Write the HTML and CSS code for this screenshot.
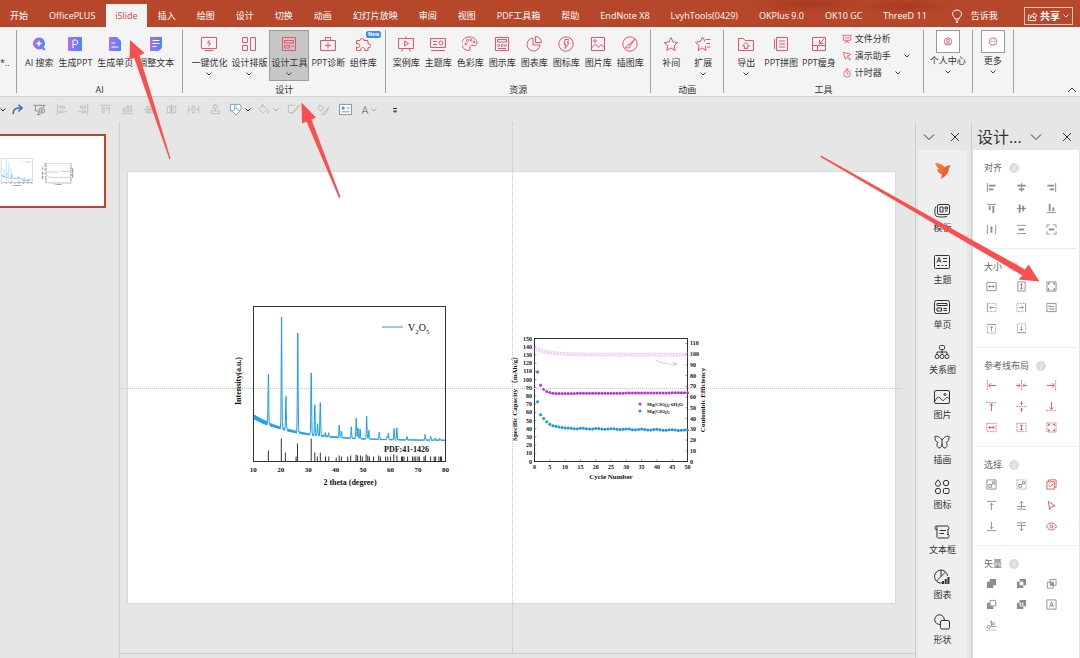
FILE: index.html
```html
<!doctype html>
<html lang="zh-CN">
<head>
    <meta charset="UTF-8">
    <meta name="viewport" content="width=device-width, initial-scale=1.0">
    <title>iSlide</title>
    <link rel="stylesheet" href="styles.css">
</head>
<body>
<!--    icon sprite    -->
    <svg class="sprite" aria-hidden="true">
        <linearGradient id="ai-fill" x1="0" y1="0" x2="1" y2="0">
            <stop offset="0" stop-color="#b06cf6"/>
            <stop offset="1" stop-color="#4a86fb"/>
        </linearGradient>
        <linearGradient id="bird-fill" x1="0" y1="0" x2="1" y2="1">
            <stop offset="0" stop-color="#fb8a3c"/>
            <stop offset="1" stop-color="#e8402c"/>
        </linearGradient>
        <symbol id="i-chev" viewBox="0 0 8 8"><path d="M1.500 2.500 4 5l2.500-2.500"/></symbol>
        <symbol id="i-down" viewBox="0 0 12 12"><path d="M1 3.500l5 5 5-5"/></symbol>
        <symbol id="i-up" viewBox="0 0 12 12"><path d="M2 8l4-4 4 4"/></symbol>
        <symbol id="i-close" viewBox="0 0 12 12"><path d="M2 2l8 8M10 2l-8 8"/></symbol>
        <symbol id="i-bulb" viewBox="0 0 12 14"><path d="M4 10c0-2-2.500-2.500-2.500-5a4.500 4 0 0 1 9 0c0 2.500-2.500 3-2.500 5zM4.500 12h3M5 13.500h2"/></symbol>
        <symbol id="i-share" viewBox="0 0 12 12"><path d="M3.500 4.500h-2v6h8v-3M3.500 8c.5-3 2-4 4-4V2l3.500 3-3.500 3V6c-2 0-3 .5-4 2z"/></symbol>

        <symbol id="i-ai-search" viewBox="0 0 16 16"><path class="ai" d="M8 1.500a6 6 0 1 0 3 11.200l2 2 1.500-1.500-1.800-2A6 6 0 0 0 8 1.500z"/><path class="white" d="M8 4l1 2.500 2.500 1-2.500 1-1 2.500-1-2.500-2.500-1 2.500-1z"/></symbol>
        <symbol id="i-ai-ppt" viewBox="0 0 16 16"><rect class="ai" x="1" y="1" width="14" height="14" rx="1"/><path class="cut" d="M6 12V4h2.500a2.200 2.200 0 0 1 0 4.500H6"/></symbol>
        <symbol id="i-ai-page" viewBox="0 0 16 16"><path class="ai" d="M2 1h8l4 4v10H2z"/><path class="cut" d="M4.500 7h4M4.500 11h7"/></symbol>
        <symbol id="i-ai-text" viewBox="0 0 16 16"><path class="ai" d="M2 1h12v10c-1 2.500-2.500 4-5 4H2z"/><path class="cut" d="M4.500 4.500h7M4.500 7.500h7M4.500 10.500h4"/></symbol>

        <symbol id="i-optimize" viewBox="0 0 16 16"><path d="M.5 1.500h15v11H.5zM3.500 14.500h9M8.500 4L6.500 7h3L7.500 10"/></symbol>
        <symbol id="i-layout" viewBox="0 0 16 16"><path d="M1.500 1.500h5v5h-5zM1.500 9.500h5v5h-5zM9.500 1.500h5v13h-5z"/></symbol>
        <symbol id="i-design" viewBox="0 0 16 16"><path d="M1.500 1.500h13v13h-13zM3.500 4.500h9v2.500h-9zM3.500 9.500h5v2.500h-5zM10.500 10h2.500"/></symbol>
        <symbol id="i-kit" viewBox="0 0 16 16"><path d="M.5 4.500h15v10H.5zM5.500 4.500v-3h5v3M8 6.500v6M5 9.500h6"/></symbol>
        <symbol id="i-puzzle" viewBox="0 0 16 16"><path d="M1.500 4.500h3.500a2 2 0 1 1 4 0h4v3.500a2 2 0 1 1 0 3.500v3H9.500a2 2 0 1 0-3.500 0H1.500v-3.500a2 2 0 1 0 0-3z"/></symbol>
        <symbol id="i-case" viewBox="0 0 16 16"><path d="M.5 2.500h15v10H.5zM5 12.500l-1.500 3M11 12.500l1.500 3M8 .5v2M6.500 5l4 2.500-4 2.500z"/></symbol>
        <symbol id="i-theme" viewBox="0 0 16 16"><path d="M.5 2.500h15v9H.5zM1 14.500h14M3 5.500h4M3 8.500h4"/><circle cx="11" cy="7" r="2"/></symbol>
        <symbol id="i-palette" viewBox="0 0 16 16"><path d="M8 1a7 6.500 0 1 0-2 13.500c2 .5 2.500-1 2-2.500-.5-2 1-3 3-2.500s4 0 4-2.500C15 3.500 12 1 8 1z"/><circle cx="4" cy="8" r="1"/><circle cx="5.500" cy="4.500" r="1"/><circle cx="9" cy="4" r="1"/><circle cx="12" cy="6" r="1"/></symbol>
        <symbol id="i-diagram" viewBox="0 0 16 16"><path d="M1.500 1.500h13v13h-13zM3.500 3.500h9v2.500h-9zM4 12.500h8"/><circle cx="4.500" cy="9.500" r="1"/><circle cx="8" cy="9.500" r="1"/><circle cx="11.500" cy="9.500" r="1"/></symbol>
        <symbol id="i-pie" viewBox="0 0 16 16"><path d="M7 2a6.500 6.500 0 1 0 7 7H7zM9.500.5v6h6a6 6 0 0 0-6-6z"/></symbol>
        <symbol id="i-flash" viewBox="0 0 16 16"><circle cx="8" cy="8" r="7.200"/><path d="M7 3.500h3.500L9.500 7h1.500l-4 5.500.8-4H6z"/></symbol>
        <symbol id="i-image" viewBox="0 0 16 16"><path d="M1.500 1.500h13v13h-13zM1.500 12l4-4 3 3.500 2.500-3 3.500 3"/><circle cx="5" cy="5" r="1.200"/></symbol>
        <symbol id="i-brush" viewBox="0 0 16 16"><circle cx="8" cy="8" r="7.200"/><path d="M12.500 3.500L7 8.500l1.200 1.200zM7 8.500c-2 0-2 2-3.500 3 2 1 5 .5 4.700-1.800"/></symbol>
        <symbol id="i-star" viewBox="0 0 16 16"><path d="M8 1.500l2 4.500 4.800.5-3.600 3.200 1 4.800L8 12l-4.200 2.500 1-4.800L1.200 6.500 6 6z"/></symbol>
        <symbol id="i-star-more" viewBox="0 0 16 16"><path d="M10 5.500L7.500 1l-2 4.500-5 .8 3.600 3.400-1 4.800L7 12l4 2.500-.6-4.500M10.500 3.500h5M11.500 7.500h3.500M12 11h3.500"/></symbol>
        <symbol id="i-export" viewBox="0 0 16 16"><path d="M.5 2.500h5l1.500 2h8.500v10H.5zM8 6.500L4.500 10h2v2.500h3V10h2z"/></symbol>
        <symbol id="i-collage" viewBox="0 0 16 16"><path d="M3.500 1.500h11v13h-11zM1.500 3v10M6 5h6M6 8h6M6 11h6"/></symbol>
        <symbol id="i-slim" viewBox="0 0 16 16"><path d="M1.500 1.500h13v13h-13zM1.500 9.500h5v5M6.500 9.500h8M13 3L8.500 7.500M8.500 4v3.500H12"/></symbol>
        <symbol id="i-analysis" viewBox="0 0 12 12"><path d="M.5 1.500h11M1.500 1.500v6h9v-6M6 7.500v2M3 10.500l3-1.500 3 1.500M3.500 5.500l1.500-2 2 2 1.500-2"/></symbol>
        <symbol id="i-pointer" viewBox="0 0 12 12"><path d="M1.500 1.500l9 2.500-4 2 4 4-1 1-4-4-1.500 3z"/></symbol>
        <symbol id="i-timer" viewBox="0 0 12 12"><circle cx="6" cy="7" r="4"/><path d="M4.500 1h3M6 1v2M6 4.500V7h2M10 2l1 1"/></symbol>
        <symbol id="i-user" viewBox="0 0 12 12"><circle cx="6" cy="6" r="4"/><circle cx="6" cy="5" r="1.500"/><path d="M3.500 9c1-2 4-2 5 0"/></symbol>
        <symbol id="i-more" viewBox="0 0 12 12"><circle cx="6" cy="6" r="4"/><path d="M3.500 6h1M5.500 6h1M7.500 6h1"/></symbol>

        <symbol id="q-redo" viewBox="0 0 14 14"><path stroke-width="1.600" d="M2.500 12C2 7 5 5 11 5.500M8 2l4 3.500L8 9"/></symbol>
        <symbol id="q-show" viewBox="0 0 14 14"><path d="M.5 2.500h13M2.500 2.500v6h3M11.500 2.500v2M4 12.500h4M6 9v3"/><circle cx="9.500" cy="8" r="3"/><path d="M8.800 6.500l2 1.500-2 1.500z"/></symbol>
        <symbol id="q-left" viewBox="0 0 14 14"><path d="M2.500 1v12M4.500 3.500h6v2h-6zM4.500 8.500h4v2h-4zM10 9.500h3"/></symbol>
        <symbol id="q-right" viewBox="0 0 14 14"><path d="M11.500 1v12M3.500 3.500h6v2h-6zM5.500 8.500h4v2h-4zM1 9.500h3"/></symbol>
        <symbol id="q-top" viewBox="0 0 14 14"><path d="M1 2.500h12M3.500 4.500h2v6h-2zM7.500 4.500h1v4M11 12V5M9.500 6.500L11 5l1.500 1.500"/></symbol>
        <symbol id="q-bottom" viewBox="0 0 14 14"><path d="M1 11.500h12M2.500 5.500h2v4h-2zM6.500 3.500h2v6h-2zM11 2v7M9.500 7.500L11 9l1.500-1.500"/></symbol>
        <symbol id="q-center" viewBox="0 0 14 14"><path d="M1 7h12M4 3.500h6v2H4zM3 8.500h8v2H3z"/></symbol>
        <symbol id="q-middle" viewBox="0 0 14 14"><path d="M7 1v12M2.500 3.500h3v7h-3zM8.500 3.500h3v7h-3z"/></symbol>
        <symbol id="q-hspace" viewBox="0 0 14 14"><path d="M1.500 3v8M5.500 3.500h3v7h-3zM12.500 3v8M10 7h2.500M1.500 7H4"/></symbol>
        <symbol id="q-vspace" viewBox="0 0 14 14"><path d="M4.500 2.500h5v3h-5zM2.500 8.500h9v3h-9zM7 1v1M7 6v2"/></symbol>
        <symbol id="q-shapes" viewBox="0 0 14 14"><path class="paper" d="M1.500 1.500h7v7h-7z"/><circle class="paper" cx="9.500" cy="5" r="3.800"/><path class="paper" d="M7.500 5l4 4-4 4-4-4z"/></symbol>
        <symbol id="q-bucket" viewBox="0 0 14 14"><path d="M6 2l5 5-4.500 4-4.500-4.500zM6 5V1M12 8c1 2 1 3 0 3s-1-1 0-3z"/></symbol>
        <symbol id="q-pencil" viewBox="0 0 14 14"><path d="M8 2.500H1.500v8h5M13 2L6 9.500l-1 2 2-1L13.500 3z"/></symbol>
        <symbol id="q-paint" viewBox="0 0 14 14"><path d="M3 2l4 3-3 4-3-3zM13 4L8 10l-3 2.500c2 .5 4 0 4.500-1.500z"/></symbol>
        <symbol id="q-text" viewBox="0 0 14 14"><path class="paper" d="M.5 1.500h13v11H.5z"/><path d="M8 5.500h3.500M3 9.500h8.500"/><path class="solid-blue" d="M3 4h3v3H3z"/></symbol>
        <symbol id="q-more" viewBox="0 0 8 8"><path d="M2 2.500h4M2.500 5L4 6.500 5.500 5z"/></symbol>

        <symbol id="d-bird" viewBox="0 0 18 18"><path class="bird" d="M1 1c4 0 8 1.500 9.500 4.500C12 4 14 3 17 4l-2 2c-.5 5-3 8-8 11l1-4.500C5 11.500 3.500 9.500 3 7l3 .5C3.500 6 2 4 1 1z"/></symbol>
        <symbol id="d-template" viewBox="0 0 16 16"><rect x="3.500" y="2.500" width="12" height="10" rx="1.500"/><path d="M6 5h3v5H6zM11 5h2.500v2H11zM11 9h2.500M2 4.500C.5 6 .5 12 1.500 13.500S8 15.500 13 14.500"/></symbol>
        <symbol id="d-theme" viewBox="0 0 16 16"><rect x=".5" y="1.500" width="15" height="13" rx="1"/><path d="M3 8.500l2-5 2 5M3.700 7h2.600M9 4.500h4M9 7.500h4M3 11.500h3M7.500 11.500h2M11 11.500h2"/></symbol>
        <symbol id="d-page" viewBox="0 0 16 16"><rect x=".5" y="1.500" width="15" height="13" rx="2"/><path d="M3 4.500h10v2H3zM3 9h4.500v3H3zM9.500 9.500H13M9.500 11.500H13"/></symbol>
        <symbol id="d-relation" viewBox="0 0 16 16"><rect x="5.500" y="1.500" width="5" height="4" rx="1"/><path d="M8 5.500v5M3 10.500v-2.500h10v2.500"/><circle cx="3" cy="12.500" r="2"/><circle cx="8" cy="12.500" r="2"/><circle cx="13" cy="12.500" r="2"/></symbol>
        <symbol id="d-image" viewBox="0 0 16 16"><rect x=".5" y="1.500" width="15" height="13" rx="1.500"/><path d="M1 12c2-4 4-5 6-2 1.500 2 2.500 2 4 0s3-2 4.500 0"/><circle cx="11" cy="5.500" r="1"/></symbol>
        <symbol id="d-butterfly" viewBox="0 0 16 16"><path d="M8 6C6 3 3 1.500.8 2.500 1 6 2 8 4 8.500c-2 1.500-1 5 1 5.500 2 0 3-2 3-4V6c2-3 5-4.500 7.200-3.500C15 6 14 8 12 8.500c2 1.500 1 5-1 5.500-2 0-3-2-3-4"/></symbol>
        <symbol id="d-icons" viewBox="0 0 16 16"><path d="M4 .8c1.500 1.700 2.500 3 2.500 4.200a2.500 2.200 0 0 1-5 0C1.500 3.800 2.500 2.500 4 .8z"/><circle cx="12" cy="4" r="2.700"/><circle cx="4" cy="12" r="2.700"/><rect x="9.500" y="9.500" width="5.500" height="5" rx="1"/></symbol>
        <symbol id="d-textbox" viewBox="0 0 16 16"><path d="M3 5.500H1.500c-1-1-1-3 .5-3.500h11.500c1.500.5 1.500 2 1 3.500M13 10.500h1.500c1 1 1 3-.5 3.500H4.500c-1.500 0-2-1.500-1.500-3V2.500M14 5v6M5.500 6.500h6.500M5.500 9.500H10"/></symbol>
        <symbol id="d-chart" viewBox="0 0 16 16"><path d="M8 14A6.500 6.500 0 1 1 13.500 7M7 1v6.500l4.500-4.500M7 7.500L2.500 12"/><path class="solid" d="M8 12h2v3H8zM10.700 10h2v5h-2zM13.400 8h2v7h-2z"/></symbol>
        <symbol id="d-shape" viewBox="0 0 16 16"><path d="M6.500 10.300A4.800 4.800 0 1 1 10.300 6"/><rect x="6.500" y="6.500" width="9" height="8.500" rx="1.500"/></symbol>

        <symbol id="t-left" viewBox="0 0 12 12"><path d="M1.500 1v10"/><path class="thick" d="M3 4h7.500M3 8h5"/></symbol>
        <symbol id="t-hcenter" viewBox="0 0 12 12"><path d="M6 1v10"/><path class="thick" d="M1.500 4h9M3 8h6"/></symbol>
        <symbol id="t-right" viewBox="0 0 12 12"><path d="M10.500 1v10"/><path class="thick" d="M1.500 4H9M4 8h5"/></symbol>
        <symbol id="t-top" viewBox="0 0 12 12"><path d="M1 1.500h10"/><path class="thick" d="M4 3v5M8 3v8"/></symbol>
        <symbol id="t-vcenter" viewBox="0 0 12 12"><path d="M1 6h10"/><path class="thick" d="M4 1.500v9M8 3v6"/></symbol>
        <symbol id="t-bottom" viewBox="0 0 12 12"><path d="M1 10.500h10"/><path class="thick" d="M4 1v8M8 5v4"/></symbol>
        <symbol id="t-hdist" viewBox="0 0 12 12"><path d="M1.500 1v10M10.500 1v10"/><path class="thick" d="M6 2.500v7"/></symbol>
        <symbol id="t-vdist" viewBox="0 0 12 12"><path d="M1 1.500h10M1 10.500h10"/><path class="thick" d="M3 6h6"/></symbol>
        <symbol id="t-pagefit" viewBox="0 0 12 12"><path d="M1 4V1h3M8 1h3v3M11 8v3H8M4 11H1V8"/><path class="thick" d="M3 6h6"/></symbol>
        <symbol id="t-samew" viewBox="0 0 12 12"><path d="M1 1.500h10v9H1zM3 6h6M4.500 4.500L3 6l1.500 1.500M7.500 4.500L9 6 7.500 7.500"/></symbol>
        <symbol id="t-sameh" viewBox="0 0 12 12"><path d="M2 1h8v10H2zM6 3v6M4.500 4.500L6 3l1.500 1.500M4.500 7.500L6 9l1.500-1.500"/></symbol>
        <symbol id="t-samesize" viewBox="0 0 12 12"><path d="M1 1h10v10H1z"/><path class="solid" d="M2 5V2h3zM7 2h3v3zM10 7v3H7zM5 10H2V7z"/></symbol>
        <symbol id="t-extl" viewBox="0 0 12 12"><path d="M1.500 1v10M4 6h5M5.500 4.500L4 6l1.500 1.500"/><path class="dash" d="M3 1.500h8v9H3"/></symbol>
        <symbol id="t-extr" viewBox="0 0 12 12"><path d="M10.500 1v10M3 6h5M6.500 4.500L8 6 6.500 7.500"/><path class="dash" d="M9 1.500H1v9h8"/></symbol>
        <symbol id="t-swap" viewBox="0 0 12 12"><path d="M1 1.500h10v9H1zM3 5h6M3 5l1.500-1.500M9 7.500H3M9 7.500L7.500 9"/></symbol>
        <symbol id="t-extt" viewBox="0 0 12 12"><path d="M1 1.500h10M6 9V4M4.500 5.500L6 4l1.500 1.500"/><path class="dash" d="M1.500 3v8h9V3"/></symbol>
        <symbol id="t-extb" viewBox="0 0 12 12"><path d="M1 10.500h10M6 3v5M4.500 6.500L6 8l1.500-1.500"/><path class="dash" d="M1.500 9V1h9v8"/></symbol>
        <symbol id="t-gl" viewBox="0 0 12 12"><path d="M3 6h8M5.500 3.500L3 6l2.500 2.500"/><path class="dash" d="M1.500 0v12"/></symbol>
        <symbol id="t-gc" viewBox="0 0 12 12"><path d="M0 6h4M2.500 4L4.500 6l-2 2M12 6H8M9.500 4l-2 2 2 2"/><path class="dash" d="M6 0v12"/></symbol>
        <symbol id="t-gr" viewBox="0 0 12 12"><path d="M1 6h8M6.500 3.500L9 6 6.500 8.500"/><path class="dash" d="M10.500 0v12"/></symbol>
        <symbol id="t-gt" viewBox="0 0 12 12"><path d="M6 11V3M4 5l2-2 2 2"/><path class="dash" d="M0 1.500h12"/></symbol>
        <symbol id="t-gm" viewBox="0 0 12 12"><path d="M6 0v4M4.500 2.500L6 4l1.500-1.500M6 12V8M4.500 9.500L6 8l1.500 1.500"/><path class="dash" d="M0 6h12"/></symbol>
        <symbol id="t-gb" viewBox="0 0 12 12"><path d="M6 1v8M4 7l2 2 2-2"/><path class="dash" d="M0 10.500h12"/></symbol>
        <symbol id="t-gw" viewBox="0 0 12 12"><path d="M3 6h6M4.500 4.500L3 6l1.500 1.500M7.500 4.500L9 6 7.500 7.500"/><path class="dash" d="M1 1.500h10v9H1z"/></symbol>
        <symbol id="t-gh" viewBox="0 0 12 12"><path d="M6 3v6M4.500 4.500L6 3l1.500 1.500M4.500 7.500L6 9l1.500-1.500"/><path class="dash" d="M1 1.500h10v9H1z"/></symbol>
        <symbol id="t-gs" viewBox="0 0 12 12"><path class="solid" d="M2 5V2h3zM7 2h3v3zM10 7v3H7zM5 10H2V7z"/><path class="dash" d="M1 1h10v10H1z"/></symbol>
        <symbol id="t-group" viewBox="0 0 12 12"><path d="M1 1h10v10H1zM3 6h3v3H3zM7 3h2.500v2.500H7z"/></symbol>
        <symbol id="t-ungroup" viewBox="0 0 12 12"><path class="dash" d="M1 1h10v10H1z"/><path d="M3 6h3v3H3zM7 3h2.500v2.500H7z"/></symbol>
        <symbol id="t-check" viewBox="0 0 12 12"><path d="M1 3h8v8H1zM3 3V1h8v8H9M3 6.500L4.500 8.500 7.500 5.500"/></symbol>
        <symbol id="t-front" viewBox="0 0 12 12"><path d="M1 1.500h10M6 11V3.500M4 5.500l2-2 2 2"/></symbol>
        <symbol id="t-forward" viewBox="0 0 12 12"><path d="M1 7h10M1 10h10M6 9V1.500M4 3.500l2-2 2 2"/></symbol>
        <symbol id="t-select" viewBox="0 0 12 12"><path d="M2.500 1.500l7.500 5-4 .5-2 3.500z"/></symbol>
        <symbol id="t-back" viewBox="0 0 12 12"><path d="M1 10.500h10M6 1v7.500M4 6.500l2 2 2-2"/></symbol>
        <symbol id="t-backward" viewBox="0 0 12 12"><path d="M1 2h10M1 5h10M6 3v7.500M4 8.500l2 2 2-2"/></symbol>
        <symbol id="t-eye" viewBox="0 0 12 12"><path d="M.5 6C3 1 9 1 11.500 6 9 11 3 11 .5 6z"/><circle cx="6" cy="6" r="1.500"/></symbol>
        <symbol id="t-union" viewBox="0 0 12 12"><path class="solid" d="M4 1h7v7H8v3H1V4h3z"/></symbol>
        <symbol id="t-combine" viewBox="0 0 12 12"><path class="solid" fill-rule="evenodd" d="M4 1h7v7H8v3H1V4h3zM4 4h4v4H4z"/></symbol>
        <symbol id="t-intersect" viewBox="0 0 12 12"><path d="M4.500 1.500h6.500v6.500H4.500zM1.500 4.500H8V11H1.500z"/><path class="solid" d="M5 5h3v3H5z"/></symbol>
        <symbol id="t-subtract" viewBox="0 0 12 12"><path d="M4.500 1.500h6v6h-6z"/><path class="solid" d="M1 4h3v4h4v3H1z"/></symbol>
        <symbol id="t-fragment" viewBox="0 0 12 12"><path class="solid" fill-rule="evenodd" d="M4 1h7v7H8v3H1V4h3zM4 4h4v4H4zM5 5h2v2H5z"/></symbol>
        <symbol id="t-char" viewBox="0 0 12 12"><path d="M1 1h10v10H1zM4 9l2-6 2 6M4.700 7h2.600"/></symbol>
        <symbol id="t-cut" viewBox="0 0 12 12"><path d="M6 1v6M4 2.500L6 1M6 7h5"/><circle cx="3" cy="7.500" r="1.700"/><circle cx="8" cy="4" r="1.200"/><path class="dash" d="M0 11h12"/></symbol>
    </svg>

<!--    tabs    -->
    <nav class="tabs">
        <a class="tab" href="#">开始</a>
        <a class="tab" href="#">OfficePLUS</a>
        <a class="tab active" href="#">iSlide</a>
        <a class="tab" href="#">插入</a>
        <a class="tab" href="#">绘图</a>
        <a class="tab" href="#">设计</a>
        <a class="tab" href="#">切换</a>
        <a class="tab" href="#">动画</a>
        <a class="tab" href="#">幻灯片放映</a>
        <a class="tab" href="#">审阅</a>
        <a class="tab" href="#">视图</a>
        <a class="tab" href="#">PDF工具箱</a>
        <a class="tab" href="#">帮助</a>
        <a class="tab" href="#">EndNote X8</a>
        <a class="tab" href="#">LvyhTools(0429)</a>
        <a class="tab" href="#">OKPlus 9.0</a>
        <a class="tab" href="#">OK10 GC</a>
        <a class="tab" href="#">ThreeD 11</a>
        <button class="tell"><svg><use href="#i-bulb"/></svg>告诉我</button>
        <button class="share"><svg><use href="#i-share"/></svg>共享<svg class="chev"><use href="#i-chev"/></svg></button>
    </nav>

<!--    ribbon    -->
    <div class="ribbon">
        <div class="group cut-off"><span>*..</span></div>
        <div class="group wide">
            <div class="items spaced">
                <button class="tool"><svg><use href="#i-ai-search"/></svg>AI 搜索</button>
                <button class="tool"><svg><use href="#i-ai-ppt"/></svg>生成PPT</button>
                <button class="tool"><svg><use href="#i-ai-page"/></svg>生成单页</button>
                <button class="tool"><svg><use href="#i-ai-text"/></svg>调整文本</button>
            </div>
            <div class="caption">AI</div>
        </div>
        <div class="group wide">
            <div class="items">
                <button class="tool"><svg><use href="#i-optimize"/></svg>一键优化<svg class="chev"><use href="#i-chev"/></svg></button>
                <button class="tool"><svg><use href="#i-layout"/></svg>设计排版<svg class="chev"><use href="#i-chev"/></svg></button>
                <button class="tool on"><svg><use href="#i-design"/></svg>设计工具<svg class="chev"><use href="#i-chev"/></svg></button>
                <button class="tool"><svg><use href="#i-kit"/></svg>PPT诊断</button>
                <button class="tool"><svg><use href="#i-puzzle"/></svg>组件库<span class="new">New</span></button>
            </div>
            <div class="caption">设计</div>
        </div>
        <div class="group">
            <div class="items">
                <button class="tool"><svg><use href="#i-case"/></svg>案例库</button>
                <button class="tool"><svg><use href="#i-theme"/></svg>主题库</button>
                <button class="tool"><svg><use href="#i-palette"/></svg>色彩库</button>
                <button class="tool"><svg><use href="#i-diagram"/></svg>图示库</button>
                <button class="tool"><svg><use href="#i-pie"/></svg>图表库</button>
                <button class="tool"><svg><use href="#i-flash"/></svg>图标库</button>
                <button class="tool"><svg><use href="#i-image"/></svg>图片库</button>
                <button class="tool"><svg><use href="#i-brush"/></svg>插图库</button>
            </div>
            <div class="caption">资源</div>
        </div>
        <div class="group">
            <div class="items">
                <button class="tool"><svg><use href="#i-star"/></svg>补间</button>
                <button class="tool"><svg><use href="#i-star-more"/></svg>扩展<svg class="chev"><use href="#i-chev"/></svg></button>
            </div>
            <div class="caption">动画</div>
        </div>
        <div class="group wide">
            <div class="items">
                <button class="tool"><svg><use href="#i-export"/></svg>导出<svg class="chev"><use href="#i-chev"/></svg></button>
                <button class="tool"><svg><use href="#i-collage"/></svg>PPT拼图</button>
                <button class="tool"><svg><use href="#i-slim"/></svg>PPT瘦身</button>
                <div class="list">
                    <button class="line"><svg><use href="#i-analysis"/></svg>文件分析</button>
                    <button class="line"><svg><use href="#i-pointer"/></svg>演示助手<svg class="chev"><use href="#i-chev"/></svg></button>
                    <button class="line"><svg><use href="#i-timer"/></svg>计时器<svg class="chev"><use href="#i-chev"/></svg></button>
                </div>
            </div>
            <div class="caption">工具</div>
        </div>
        <div class="group">
            <button class="tool boxed"><svg><use href="#i-user"/></svg>个人中心<svg class="chev"><use href="#i-chev"/></svg></button>
        </div>
        <div class="group">
            <button class="tool boxed"><svg><use href="#i-more"/></svg>更多<svg class="chev"><use href="#i-chev"/></svg></button>
        </div>
        <button class="collapse" aria-label="折叠功能区"><svg><use href="#i-up"/></svg></button>
    </div>

<!--    quick access    -->
    <div class="quick">
        <button class="first" aria-label="撤消选项"><svg class="chev"><use href="#i-chev"/></svg></button>
        <button class="redo" aria-label="恢复"><svg><use href="#q-redo"/></svg></button>
        <button class="live" aria-label="放映"><svg><use href="#q-show"/></svg></button>
        <button aria-label="左对齐"><svg><use href="#q-left"/></svg></button>
        <button aria-label="右对齐"><svg><use href="#q-right"/></svg></button>
        <button aria-label="顶端对齐"><svg><use href="#q-top"/></svg></button>
        <button aria-label="底端对齐"><svg><use href="#q-bottom"/></svg></button>
        <button aria-label="垂直居中"><svg><use href="#q-center"/></svg></button>
        <button aria-label="水平居中"><svg><use href="#q-middle"/></svg></button>
        <button aria-label="横向分布"><svg><use href="#q-hspace"/></svg></button>
        <button aria-label="纵向分布"><svg><use href="#q-vspace"/></svg></button>
        <button class="split shapes" aria-label="形状"><svg><use href="#q-shapes"/></svg><svg class="chev"><use href="#i-chev"/></svg></button>
        <button class="split" aria-label="填充"><svg><use href="#q-bucket"/></svg><svg class="chev"><use href="#i-chev"/></svg></button>
        <button aria-label="编辑"><svg><use href="#q-pencil"/></svg></button>
        <button class="after" aria-label="格式刷"><svg><use href="#q-paint"/></svg></button>
        <button class="live" aria-label="文本框"><svg><use href="#q-text"/></svg></button>
        <button class="split"><span class="letter">A</span><svg class="chev"><use href="#i-chev"/></svg></button>
        <button class="live" aria-label="更多命令"><svg class="chev"><use href="#q-more"/></svg></button>
    </div>

    <main class="main">
<!--        thumbnails        -->
        <aside class="thumbs">
            <div class="thumb">
                <svg viewBox="128 172 767 431"><use href="#slide-art"/></svg>
            </div>
        </aside>

<!--        slide        -->
        <section class="workspace">
            <div class="canvas">
                <div class="slide">
                    <svg viewBox="128 172 767 431">
                        <g id="slide-art">
                            <g id="xrd" class="chart">
                                <text class="title" x="350" y="485" text-anchor="middle">2 theta (degree)</text>
                                <text class="title" transform="translate(241 381) rotate(-90)" text-anchor="middle">Intensity(a.u.)</text>
                                <path class="xrd-line" d="M382 327h21"/>
                                <text class="formula" x="408" y="331">V<tspan class="sub" dy="3">2</tspan><tspan dy="-3">O</tspan><tspan class="sub" dy="3">5</tspan></text>
                                <text class="title" x="384" y="452">PDF:41-1426</text>
                            </g>
                            <g id="cycle" class="chart">
                                <text class="label" x="611" y="479" text-anchor="middle">Cycle Number</text>
                                <text class="label" transform="translate(517 397) rotate(-90)" text-anchor="middle">Specific Capacity （mAh/g）</text>
                                <text class="label" transform="translate(705 400) rotate(-90)" text-anchor="middle">Coulombic Efficiency</text>
                                <circle class="violet" cx="640" cy="404" r="1.500"/>
                                <text class="small" x="647" y="406">Mg(ClO<tspan class="tiny" dy="1">4</tspan><tspan dy="-1">)</tspan><tspan class="tiny" dy="1">2</tspan><tspan dy="-1">·6H</tspan><tspan class="tiny" dy="1">2</tspan><tspan dy="-1">O</tspan></text>
                                <circle class="blue" cx="640" cy="411" r="1.500"/>
                                <text class="small" x="647" y="413">Mg(ClO<tspan class="tiny" dy="1">4</tspan><tspan dy="-1">)</tspan><tspan class="tiny" dy="1">2</tspan></text>
                                <path class="hint" d="M656 360q8 5 20 4M673 362l4 2-4 2"/>
                            </g>
                        </g>
                    </svg>
                </div>
            </div>
            <div class="notes"></div>
        </section>

<!--        iSlide dock        -->
        <aside class="dock">
            <header class="pane-head">
                <button aria-label="选项"><svg><use href="#i-down"/></svg></button>
                <button aria-label="关闭"><svg><use href="#i-close"/></svg></button>
            </header>
            <div class="dock-body">
                <svg class="logo"><use href="#d-bird"/></svg>
                <button class="entry top"><svg><use href="#d-template"/></svg>模板</button>
                <button class="entry"><svg><use href="#d-theme"/></svg>主题</button>
                <button class="entry"><svg><use href="#d-page"/></svg>单页</button>
                <button class="entry"><svg><use href="#d-relation"/></svg>关系图</button>
                <button class="entry"><svg><use href="#d-image"/></svg>图片</button>
                <button class="entry"><svg><use href="#d-butterfly"/></svg>插画</button>
                <button class="entry"><svg><use href="#d-icons"/></svg>图标</button>
                <button class="entry"><svg><use href="#d-textbox"/></svg>文本框</button>
                <button class="entry"><svg><use href="#d-chart"/></svg>图表</button>
                <button class="entry"><svg><use href="#d-shape"/></svg>形状</button>
            </div>
        </aside>

<!--        design tools        -->
        <aside class="design">
            <header class="pane-head">
                <h2>设计...</h2>
                <button aria-label="选项"><svg><use href="#i-down"/></svg></button>
                <button aria-label="关闭"><svg><use href="#i-close"/></svg></button>
            </header>
            <div class="design-body">
                <section class="set">
                    <h3>对齐<i class="info">i</i></h3>
                    <div class="grid">
                        <button aria-label="左对齐"><svg><use href="#t-left"/></svg></button>
                        <button aria-label="水平居中"><svg><use href="#t-hcenter"/></svg></button>
                        <button aria-label="右对齐"><svg><use href="#t-right"/></svg></button>
                        <button aria-label="顶端对齐"><svg><use href="#t-top"/></svg></button>
                        <button aria-label="垂直居中"><svg><use href="#t-vcenter"/></svg></button>
                        <button aria-label="底端对齐"><svg><use href="#t-bottom"/></svg></button>
                        <button aria-label="横向分布"><svg><use href="#t-hdist"/></svg></button>
                        <button aria-label="纵向分布"><svg><use href="#t-vdist"/></svg></button>
                        <button aria-label="页面居中"><svg><use href="#t-pagefit"/></svg></button>
                    </div>
                </section>
                <section class="set">
                    <h3>大小<i class="info">i</i></h3>
                    <div class="grid">
                        <button aria-label="等宽"><svg><use href="#t-samew"/></svg></button>
                        <button aria-label="等高"><svg><use href="#t-sameh"/></svg></button>
                        <button aria-label="等大小"><svg><use href="#t-samesize"/></svg></button>
                        <button aria-label="左延伸"><svg><use href="#t-extl"/></svg></button>
                        <button aria-label="右延伸"><svg><use href="#t-extr"/></svg></button>
                        <button aria-label="互换"><svg><use href="#t-swap"/></svg></button>
                        <button aria-label="上延伸"><svg><use href="#t-extt"/></svg></button>
                        <button aria-label="下延伸"><svg><use href="#t-extb"/></svg></button>
                    </div>
                </section>
                <section class="set guides">
                    <h3>参考线布局<i class="info">i</i></h3>
                    <div class="grid">
                        <button aria-label="左参考线"><svg><use href="#t-gl"/></svg></button>
                        <button aria-label="中参考线"><svg><use href="#t-gc"/></svg></button>
                        <button aria-label="右参考线"><svg><use href="#t-gr"/></svg></button>
                        <button aria-label="上参考线"><svg><use href="#t-gt"/></svg></button>
                        <button aria-label="水平参考线"><svg><use href="#t-gm"/></svg></button>
                        <button aria-label="下参考线"><svg><use href="#t-gb"/></svg></button>
                        <button aria-label="宽度参考线"><svg><use href="#t-gw"/></svg></button>
                        <button aria-label="高度参考线"><svg><use href="#t-gh"/></svg></button>
                        <button aria-label="四周参考线"><svg><use href="#t-gs"/></svg></button>
                    </div>
                </section>
                <section class="set">
                    <h3>选择<i class="info">i</i></h3>
                    <div class="grid">
                        <button aria-label="组合"><svg><use href="#t-group"/></svg></button>
                        <button aria-label="取消组合"><svg><use href="#t-ungroup"/></svg></button>
                        <button class="red" aria-label="选择相同"><svg><use href="#t-check"/></svg></button>
                        <button aria-label="置顶"><svg><use href="#t-front"/></svg></button>
                        <button aria-label="上移"><svg><use href="#t-forward"/></svg></button>
                        <button class="red" aria-label="选择窗格"><svg><use href="#t-select"/></svg></button>
                        <button aria-label="置底"><svg><use href="#t-back"/></svg></button>
                        <button aria-label="下移"><svg><use href="#t-backward"/></svg></button>
                        <button class="red" aria-label="显示"><svg><use href="#t-eye"/></svg></button>
                    </div>
                </section>
                <section class="set">
                    <h3>矢量<i class="info">i</i></h3>
                    <div class="grid">
                        <button aria-label="结合"><svg><use href="#t-union"/></svg></button>
                        <button aria-label="组合形状"><svg><use href="#t-combine"/></svg></button>
                        <button aria-label="相交"><svg><use href="#t-intersect"/></svg></button>
                        <button aria-label="剪除"><svg><use href="#t-subtract"/></svg></button>
                        <button aria-label="拆分"><svg><use href="#t-fragment"/></svg></button>
                        <button aria-label="文字矢量化"><svg><use href="#t-char"/></svg></button>
                        <button aria-label="裁剪"><svg><use href="#t-cut"/></svg></button>
                    </div>
                </section>
            </div>
        </aside>
    </main>

<!--    red arrows over the window    -->
    <svg class="arrows" viewBox="0 0 1080 658" preserveAspectRatio="none" aria-hidden="true">
        <path d="M130 40l14.500 13-5 2.500L170.500 158.500 169.500 159.500 134 57.500 129.500 60z"/>
        <path d="M301.500 102.500L316 117.500l-4.500 2L340.500 197l-1.500 1L306.500 121.500l-4.500 2z"/>
        <path d="M1039.500 281.500L1028.500 264.500l-3.500 5L821 155.500l-.5 1.500 202 118.500-4 4z"/>
    </svg>

    <script src="script.js"></script>
</body>
</html>
```

FILE: styles.css
```css
* {
    box-sizing: border-box;
    margin: 0;
    padding: 0;
}
body {
    position: relative;
    display: flex;
    flex-direction: column;
    min-height: 100vh;
    overflow-x: hidden;
    background: #e6e6e6;
    color: #333;
    font: 9px/12px "Open Sans", "Noto Sans CJK SC", sans-serif;
}
button {
    border: 0;
    background: none;
    color: inherit;
    font: inherit;
    white-space: nowrap;
}
svg {
    display: block;
    flex: none;
    fill: none;
    stroke: currentColor;
}
.sprite {
    position: absolute;
    width: 0;
    height: 0;
}
.chev {
    width: 8px;
    height: 8px;
    stroke: #444;
}

/*sprite paints*/
.ai {
    fill: url(#ai-fill);
    stroke: none;
}
.bird {
    fill: url(#bird-fill);
    stroke: none;
}
.white {
    fill: #fff;
    stroke: none;
}
.paper {
    fill: #fff;
}
.cut {
    stroke: #fff;
}
.solid {
    fill: currentColor;
    stroke: none;
}
.solid-blue {
    fill: #4a8fd8;
    stroke: none;
}
.thick {
    stroke-width: 2;
}
.dash {
    stroke-dasharray: 2 1;
    opacity: .8;
}

/*tabs start*/
.tabs {
    display: flex;
    gap: 1px;
    align-items: flex-end;
    height: 27px;
    background:
        radial-gradient(ellipse 60px 10px at 810px 4px, #a63a20, transparent),
        radial-gradient(ellipse 50px 8px at 905px 6px, #a63a20, transparent),
        #b7472a;
    color: #fff;
    white-space: nowrap;
}
.tab {
    height: 23px;
    padding: 0 10px;
    color: #fff;
    line-height: 23px;
    text-decoration: none;
}
.tab.active {
    padding: 0 9px;
    background: #f4f4f4;
    color: #c0492f;
}
.tell {
    display: flex;
    align-items: center;
    gap: 8px;
    height: 23px;
    margin-left: 13px;
}
.tell svg {
    width: 12px;
    height: 14px;
}
.share {
    display: flex;
    align-items: center;
    gap: 2px;
    height: 18px;
    margin: 0 7px 2px auto;
    padding: 0 2px;
    border: 1px solid #e9c4b9;
    font-weight: bold;
    font-size: 10px;
}
.share svg {
    width: 11px;
    height: 11px;
}
.share .chev {
    width: 8px;
    height: 8px;
    stroke: #fff;
}
/*tabs end*/

/*ribbon start*/
.ribbon {
    display: flex;
    height: 70px;
    padding-top: 3px;
    border-bottom: 1px solid #d4d4d4;
    background: #f4f4f4;
}
.group {
    display: flex;
    flex-direction: column;
    height: 63px;
    padding: 0 4px;
    border-right: 1px solid #a0a0a0;
}
.group.wide {
    padding: 0 6px;
}
.group.cut-off {
    width: 17px;
    padding: 27px 0 0;
}
.items {
    display: flex;
}
.items.spaced {
    gap: 1px;
}
.caption {
    line-height: 18px;
    text-align: center;
}
.tool {
    position: relative;
    display: flex;
    flex-direction: column;
    align-items: center;
    min-width: 32px;
    height: 51px;
    padding: 6px 2px 0;
}
.tool svg {
    width: 16px;
    height: 16px;
    margin-bottom: 5px;
    color: #ec5565;
}
.tool .chev {
    width: 8px;
    height: 8px;
    margin: 1px 0 0;
}
.tool.on {
    background: #c6c6c6;
    box-shadow: inset 0 0 0 1px #9c9c9c;
}
.tool.boxed {
    padding-top: 0;
}
.tool.boxed svg {
    width: 24px;
    height: 23px;
    margin-bottom: 2px;
    padding: 5px;
    border: 1px solid #999;
    background: #fff;
}
.tool.boxed .chev {
    width: 8px;
    height: 8px;
    margin: 1px 0 0;
    padding: 0;
    border: 0;
    background: none;
}
.new {
    position: absolute;
    top: 1px;
    right: -2px;
    padding: 0 2px;
    border-radius: 2px;
    background: #3f8ff0;
    color: #fff;
    font-weight: bold;
    font-size: 5px;
    line-height: 7px;
}
.list {
    display: flex;
    flex-direction: column;
    padding: 0 6px 0 4px;
}
.line {
    display: flex;
    align-items: center;
    gap: 3px;
    height: 17px;
}
.line svg {
    width: 10px;
    height: 10px;
    color: #ec5565;
}
.line .chev {
    width: 8px;
    height: 8px;
    margin-left: 9px;
}
.collapse {
    align-self: flex-end;
    margin-left: auto;
    padding: 0 2px;
}
.collapse svg {
    width: 12px;
    height: 12px;
}
/*ribbon end*/

/*quick access start*/
.quick {
    display: flex;
    align-items: center;
    height: 25px;
    color: #bcbcbc;
}
.quick button {
    display: flex;
    align-items: center;
    justify-content: center;
    width: 22px;
}
.quick svg {
    width: 13px;
    height: 13px;
}
.quick .chev {
    width: 8px;
    height: 8px;
    stroke: #aaa;
}
.quick .first {
    width: 6px;
}
.quick .split {
    gap: 2px;
    width: 28px;
}
.quick .after {
    margin-left: 8px;
}
.quick .redo {
    color: #2f74b5;
}
.quick .live {
    color: #7f8c8c;
}
.quick .shapes {
    color: #6a9ac4;
}
.quick .first .chev,
.quick .live .chev,
.quick .shapes .chev {
    stroke: #333;
}
.letter {
    color: #8a8a8a;
    font-size: 11px;
}
/*quick access end*/

.main {
    display: grid;
    flex: 1;
    grid-template-columns: 120px 1fr 56px 109px;
}

/*thumbs start*/
.thumbs {
    display: flex;
    align-items: flex-start;
    justify-content: flex-end;
    padding: 12px 13px 0 0;
    overflow: hidden;
    border-right: 1px solid #cfcfcf;
}
.thumb {
    flex: none;
    padding: 1px;
    border: 2px solid #b7472a;
    background: #fff;
}
.thumb svg {
    width: 121px;
}
/*thumbs end*/

/*workspace start*/
.workspace {
    display: flex;
    flex-direction: column;
    min-width: 0;
}
.canvas {
    position: relative;
    display: flex;
    flex: 1;
    align-items: center;
    margin-right: 12px;
    padding: 0 8px;
}
.canvas::before,
.canvas::after {
    position: absolute;
    content: "";
}
.canvas::before {
    top: 0;
    bottom: 0;
    left: 50%;
    border-left: 1px dotted #c4c4c4;
}
.canvas::after {
    top: 50%;
    right: 0;
    left: 0;
    border-top: 1px dotted #c4c4c4;
}
.slide {
    flex: 1;
    background: #fff;
    box-shadow: 0 0 1px 1px #dadada;
}
.slide svg {
    width: 100%;
}
.notes {
    height: 5px;
    border-top: 1px solid #cfcfcf;
}

.chart {
    fill: none;
    stroke: none;
}
.chart text {
    fill: #111;
    font-weight: bold;
    font-family: "Liberation Serif", "Noto Sans CJK SC", serif;
}
.chart .title {
    font-size: 8px;
}
.chart .label {
    font-size: 7px;
}
.chart .small {
    font-size: 5px;
}
.chart .tick {
    font-size: 6px;
}
.chart .tiny {
    font-size: 3px;
}
.chart .formula {
    font-weight: normal;
    font-size: 10px;
}
.chart .sub {
    font-size: 7px;
}
.frame,
.sticks {
    stroke: #333;
}
.xrd-line {
    stroke: #1b9ceb;
}
.violet {
    fill: #b933dd;
}
.blue {
    fill: #1893e6;
}
.ring {
    stroke: #e3a0ee;
    stroke-width: .5;
}
.hint {
    stroke: #c98be0;
    stroke-width: .5;
}
/*workspace end*/

/*panes start*/
.pane-head {
    display: flex;
    align-items: center;
    justify-content: space-between;
    height: 28px;
    padding: 2px 10px 0 7px;
}
.pane-head svg {
    width: 12px;
    height: 12px;
    stroke: #333;
}
.pane-head h2 {
    margin-right: auto;
    font-weight: normal;
    font-size: 16px;
    line-height: 26px;
}
.dock,
.design {
    border-left: 1px solid #cfcfcf;
}
.dock-body {
    display: flex;
    flex-direction: column;
    align-items: center;
    height: calc(100% - 28px);
    margin: 0 4px 0 2px;
    background: #efefef;
}
.logo {
    width: 18px;
    height: 18px;
    margin: 12px 0 15px;
}
.entry {
    display: flex;
    flex-direction: column;
    align-items: center;
    justify-content: center;
    gap: 4px;
    height: 45px;
}
.entry.top {
    margin-bottom: 7px;
}
.entry svg {
    width: 16px;
    height: 16px;
}
.design .pane-head {
    gap: 19px;
    padding: 2px 7px 0 5px;
}
.design .pane-head h2 {
    margin-right: -19px;
    flex: 1;
}
.design-body {
    height: calc(100% - 28px);
    margin: 0 1px;
    padding: 0 3px;
    background: #fff;
}
.set {
    height: 99px;
    padding: 9px 0 8px;
    border-bottom: 1px solid #ededed;
    color: #8c8c8c;
}
.set:last-child {
    border-bottom: 0;
}
.set h3 {
    display: flex;
    align-items: center;
    gap: 7px;
    padding-left: 8px;
    color: #666;
    font-weight: normal;
    font-size: 9px;
    line-height: 18px;
}
.info {
    width: 10px;
    height: 10px;
    border-radius: 50%;
    background: #dcdcdc;
    color: #fff;
    font-size: 8px;
    line-height: 10px;
    text-align: center;
}
.grid {
    display: grid;
    grid-template-columns: repeat(3, 30px);
    grid-auto-rows: 21px;
}
.grid button {
    display: flex;
    align-items: center;
    justify-content: center;
}
.grid svg {
    width: 11px;
    height: 11px;
}
.guides .grid,
.grid .red {
    color: #e25454;
}
/*panes end*/

.arrows {
    position: absolute;
    top: 0;
    left: 0;
    width: 100%;
    height: 100%;
    fill: #fa4f4f;
    stroke: none;
    pointer-events: none;
}
```

FILE: script.js
```js
let svgNS = 'http://www.w3.org/2000/svg';
let xrd = document.querySelector('#xrd');
let cycle = document.querySelector('#cycle');

function add(parent, name, attrs, text) {
    let el = document.createElementNS(svgNS, name);
    for (let key in attrs) {
        el.setAttribute(key, attrs[key]);
    }
    if (text !== undefined) {
        el.textContent = text;
    }
    parent.appendChild(el);
}

// XRD pattern: [2 theta, height above the background]
let peaks = [
    [15.5, 49], [20.3, 110], [21.9, 32], [26.2, 99], [31.1, 61], [32.4, 31], [33.4, 11], [34.4, 34],
    [36.2, 3], [37.5, 4], [41.3, 12], [42.1, 6], [45.7, 11], [47.5, 21], [48.1, 10], [48.9, 9],
    [51.3, 22], [52.1, 8], [55.9, 8], [58.8, 3], [59.2, 6], [61.3, 11], [62.3, 12], [66, 3],
    [72.6, 6], [74.6, 4], [76.2, 2], [78, 2]
];
// reference card: [2 theta, height]
let sticks = [
    [15.5, 11], [20.2, 23], [21.7, 9], [25.6, 5], [26.1, 18], [31.1, 23], [32.4, 9], [33.3, 5], [34.4, 9],
    [36.3, 5], [37.5, 5], [40.2, 4], [41.3, 6], [42.1, 5], [44.4, 5], [45.5, 6], [47.4, 7], [48, 6],
    [49, 6], [49.7, 5], [51.1, 7], [51.7, 6], [52.3, 5], [53.8, 5], [55.7, 6], [56.3, 5], [58.2, 5],
    [59, 5], [60, 5], [61.2, 7], [62.3, 6], [64, 5], [64.4, 5], [64.9, 5], [66.2, 5], [68, 5], [68.6, 5],
    [69.2, 5], [70, 5], [70.5, 5], [72.2, 5], [72.7, 6], [74.6, 5], [75.9, 5], [76.4, 5], [77.6, 5], [78.2, 5], [78.6, 5]
];

function xrdX(deg) {
    return 253.3 + (deg - 10) * 2.745;
}

function drawXrd() {
    let line = '';
    for (let deg = 10; deg <= 80; deg += 0.1) {
        let noise = Math.sin(deg * 47) * (0.6 + 1.8 * Math.exp((10 - deg) / 14));
        let y = 440.5 - 24 * Math.exp((10 - deg) / 15) + noise;
        peaks.forEach(p => {
            y -= p[1] * Math.exp(-Math.pow((deg - p[0]) / 0.18, 2));
        });
        line += (line ? 'L' : 'M') + xrdX(deg).toFixed(1) + ' ' + y.toFixed(1);
    }
    add(xrd, 'path', {class: 'xrd-line', d: line});

    let marks = '';
    sticks.forEach(s => {
        marks += 'M' + xrdX(s[0]).toFixed(1) + ' 461.500v-' + s[1];
    });
    add(xrd, 'path', {class: 'sticks', d: marks});
    add(xrd, 'rect', {class: 'frame', x: 253.5, y: 306.5, width: 192, height: 155});
    for (let deg = 10; deg <= 80; deg += 10) {
        add(xrd, 'text', {class: 'label', x: xrdX(deg), y: 472, 'text-anchor': 'middle'}, deg);
    }
}

// cycling data, one value per cycle
let violet = [109, 93, 88, 85.5, 84, 83.3, 83, 83];
let blue = [73, 57, 52.5, 48.5, 45.5, 43.5, 43, 42, 41.5, 41];

function drawCycle() {
    let left = 534.5, bottom = 461.5, stepX = 3.06;
    add(cycle, 'rect', {class: 'frame', x: left, y: 338.5, width: 153, height: 123});
    let ticks = '';
    for (let v = 0; v <= 150; v += 10) {
        let y = bottom - v * 0.82;
        ticks += 'M' + left + ' ' + y + 'h2';
        add(cycle, 'text', {class: 'tick', x: 532, y: y + 2, 'text-anchor': 'end'}, v);
    }
    for (let v = 0; v <= 110; v += 10) {
        let y = bottom - v * 1.073;
        ticks += 'M687.500 ' + y + 'h-2';
        add(cycle, 'text', {class: 'tick', x: 690, y: y + 2}, v);
    }
    for (let n = 0; n <= 50; n += 5) {
        ticks += 'M' + (left + n * stepX) + ' ' + bottom + 'v-2';
        add(cycle, 'text', {class: 'tick', x: left + n * stepX, y: 469, 'text-anchor': 'middle'}, n);
    }
    add(cycle, 'path', {class: 'frame', d: ticks, 'stroke-width': 0.5});
    for (let n = 0; n <= 50; n++) {
        let x = left + n * stepX;
        add(cycle, 'circle', {class: 'ring', cx: x, cy: 354.7 - 6 * Math.exp(-n / 5), r: 1.6});
        if (n > 0) {
            let v = violet[n - 1] || 82.8 + n * 0.02;
            let b = blue[n - 1] || 40.5 - (n - 10) * 0.06 + Math.sin(n * 1.3) * 0.5;
            add(cycle, 'circle', {class: 'violet', cx: x, cy: bottom - v * 0.82, r: 1.5});
            add(cycle, 'circle', {class: 'blue', cx: x, cy: bottom - b * 0.82, r: 1.5});
        }
    }
}

drawXrd();
drawCycle();
```
